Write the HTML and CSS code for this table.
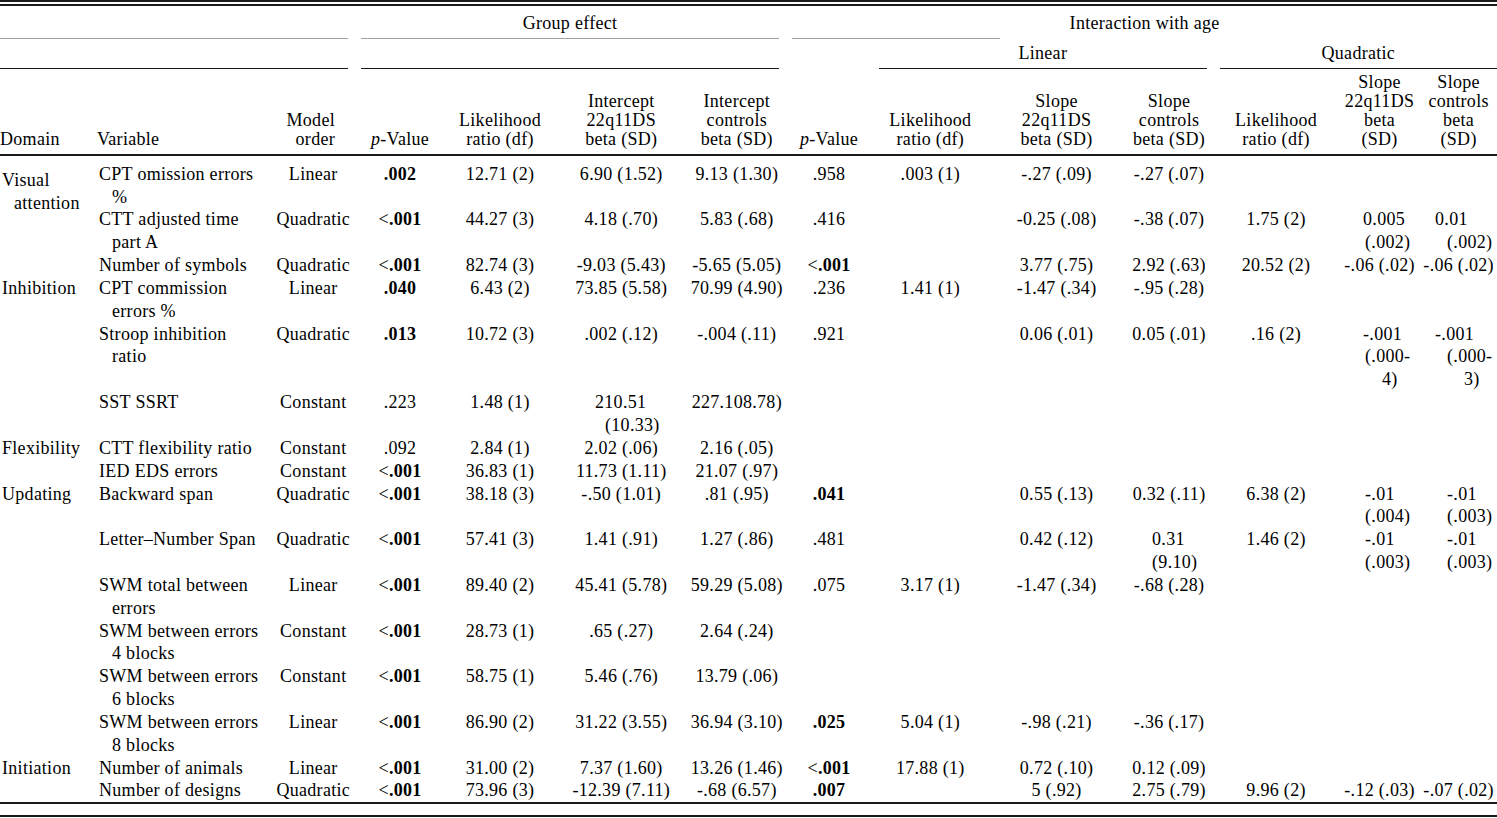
FILE: index.html
```html
<!DOCTYPE html>
<html>
<head>
<meta charset="utf-8">
<title>Table</title>
<link rel="stylesheet" href="styles.css">
</head>
<body>
<div class="wrap">
<table class="tbl">
<colgroup>
<col class="c1"><col class="c2"><col class="c3"><col class="c4"><col class="c5"><col class="c6"><col class="c7">
<col class="c8"><col class="c9"><col class="c10"><col class="c11"><col class="c12"><col class="c13"><col class="c14">
</colgroup>
<thead>
<tr class="h1">
<th colspan="3"><div class="grp gl">&nbsp;</div></th>
<th colspan="4"><div class="grp gm">Group effect</div></th>
<th colspan="7"><div class="grp gr gi">Interaction with age</div></th>
</tr>
<tr class="h2">
<th colspan="3"><div class="sub gl">&nbsp;</div></th>
<th colspan="4"><div class="sub gm">&nbsp;</div></th>
<th><div class="sub none">&nbsp;</div></th>
<th colspan="3"><div class="sub gm">Linear</div></th>
<th colspan="3"><div class="sub gr">Quadratic</div></th>
</tr>
<tr class="h3">
<th class="tl">Domain</th>
<th class="tl tv">Variable</th>
<th class="tr">Model<br>order</th>
<th><i>p</i>-Value</th>
<th>Likelihood<br>ratio (df)</th>
<th>Intercept<br>22q11DS<br>beta (SD)</th>
<th>Intercept<br>controls<br>beta (SD)</th>
<th><i>p</i>-Value</th>
<th>Likelihood<br>ratio (df)</th>
<th>Slope<br>22q11DS<br>beta (SD)</th>
<th>Slope<br>controls<br>beta (SD)</th>
<th>Likelihood<br>ratio (df)</th>
<th>Slope<br>22q11DS<br>beta<br>(SD)</th>
<th>Slope<br>controls<br>beta<br>(SD)</th>
</tr>
</thead>
<tbody>
<tr class="first">
<td class="dom va" rowspan="3">Visual<br>attention</td>
<td class="var">CPT omission errors<br>%</td>
<td>Linear</td>
<td><b>.002</b></td>
<td>12.71 (2)</td>
<td>6.90 (1.52)</td>
<td>9.13 (1.30)</td>
<td>.958</td>
<td>.003 (1)</td>
<td>-.27 (.09)</td>
<td>-.27 (.07)</td>
<td></td><td></td><td></td>
</tr>
<tr>
<td class="var">CTT adjusted time<br>part A</td>
<td>Quadratic</td>
<td>&lt;<b>.001</b></td>
<td>44.27 (3)</td>
<td>4.18 (.70)</td>
<td>5.83 (.68)</td>
<td>.416</td>
<td></td>
<td>-0.25 (.08)</td>
<td>-.38 (.07)</td>
<td>1.75 (2)</td>
<td class="h13">0.005<br>(.002)</td>
<td class="h14">0.01<br>(.002)</td>
</tr>
<tr>
<td class="var">Number of symbols</td>
<td>Quadratic</td>
<td>&lt;<b>.001</b></td>
<td>82.74 (3)</td>
<td>-9.03 (5.43)</td>
<td>-5.65 (5.05)</td>
<td>&lt;<b>.001</b></td>
<td></td>
<td>3.77 (.75)</td>
<td>2.92 (.63)</td>
<td>20.52 (2)</td>
<td>-.06 (.02)</td>
<td>-.06 (.02)</td>
</tr>
<tr>
<td class="dom" rowspan="3">Inhibition</td>
<td class="var">CPT commission<br>errors %</td>
<td>Linear</td>
<td><b>.040</b></td>
<td>6.43 (2)</td>
<td>73.85 (5.58)</td>
<td>70.99 (4.90)</td>
<td>.236</td>
<td>1.41 (1)</td>
<td>-1.47 (.34)</td>
<td>-.95 (.28)</td>
<td></td><td></td><td></td>
</tr>
<tr>
<td class="var">Stroop inhibition<br>ratio</td>
<td>Quadratic</td>
<td><b>.013</b></td>
<td>10.72 (3)</td>
<td>.002 (.12)</td>
<td>-.004 (.11)</td>
<td>.921</td>
<td></td>
<td>0.06 (.01)</td>
<td>0.05 (.01)</td>
<td>.16 (2)</td>
<td class="h13">-.001<br>(.000-<br><span class="ind">4)</span></td>
<td class="h14">-.001<br>(.000-<br><span class="ind">3)</span></td>
</tr>
<tr>
<td class="var">SST SSRT</td>
<td>Constant</td>
<td>.223</td>
<td>1.48 (1)</td>
<td class="h6">210.51<br>(10.33)</td>
<td>227.108.78)</td>
<td></td><td></td><td></td><td></td><td></td><td></td><td></td>
</tr>
<tr>
<td class="dom" rowspan="2">Flexibility</td>
<td class="var">CTT flexibility ratio</td>
<td>Constant</td>
<td>.092</td>
<td>2.84 (1)</td>
<td>2.02 (.06)</td>
<td>2.16 (.05)</td>
<td></td><td></td><td></td><td></td><td></td><td></td><td></td>
</tr>
<tr>
<td class="var">IED EDS errors</td>
<td>Constant</td>
<td>&lt;<b>.001</b></td>
<td>36.83 (1)</td>
<td>11.73 (1.11)</td>
<td>21.07 (.97)</td>
<td></td><td></td><td></td><td></td><td></td><td></td><td></td>
</tr>
<tr>
<td class="dom" rowspan="6">Updating</td>
<td class="var">Backward span</td>
<td>Quadratic</td>
<td>&lt;<b>.001</b></td>
<td>38.18 (3)</td>
<td>-.50 (1.01)</td>
<td>.81 (.95)</td>
<td><b>.041</b></td>
<td></td>
<td>0.55 (.13)</td>
<td>0.32 (.11)</td>
<td>6.38 (2)</td>
<td class="h13 flat">-.01<br>(.004)</td>
<td class="h14 flat">-.01<br>(.003)</td>
</tr>
<tr>
<td class="var">Letter–Number Span</td>
<td>Quadratic</td>
<td>&lt;<b>.001</b></td>
<td>57.41 (3)</td>
<td>1.41 (.91)</td>
<td>1.27 (.86)</td>
<td>.481</td>
<td></td>
<td>0.42 (.12)</td>
<td class="h11">0.31<br>(9.10)</td>
<td>1.46 (2)</td>
<td class="h13 flat">-.01<br>(.003)</td>
<td class="h14 flat">-.01<br>(.003)</td>
</tr>
<tr>
<td class="var">SWM total between<br>errors</td>
<td>Linear</td>
<td>&lt;<b>.001</b></td>
<td>89.40 (2)</td>
<td>45.41 (5.78)</td>
<td>59.29 (5.08)</td>
<td>.075</td>
<td>3.17 (1)</td>
<td>-1.47 (.34)</td>
<td>-.68 (.28)</td>
<td></td><td></td><td></td>
</tr>
<tr>
<td class="var">SWM between errors<br>4 blocks</td>
<td>Constant</td>
<td>&lt;<b>.001</b></td>
<td>28.73 (1)</td>
<td>.65 (.27)</td>
<td>2.64 (.24)</td>
<td></td><td></td><td></td><td></td><td></td><td></td><td></td>
</tr>
<tr>
<td class="var">SWM between errors<br>6 blocks</td>
<td>Constant</td>
<td>&lt;<b>.001</b></td>
<td>58.75 (1)</td>
<td>5.46 (.76)</td>
<td>13.79 (.06)</td>
<td></td><td></td><td></td><td></td><td></td><td></td><td></td>
</tr>
<tr>
<td class="var">SWM between errors<br>8 blocks</td>
<td>Linear</td>
<td>&lt;<b>.001</b></td>
<td>86.90 (2)</td>
<td>31.22 (3.55)</td>
<td>36.94 (3.10)</td>
<td><b>.025</b></td>
<td>5.04 (1)</td>
<td>-.98 (.21)</td>
<td>-.36 (.17)</td>
<td></td><td></td><td></td>
</tr>
<tr>
<td class="dom" rowspan="2">Initiation</td>
<td class="var">Number of animals</td>
<td>Linear</td>
<td>&lt;<b>.001</b></td>
<td>31.00 (2)</td>
<td>7.37 (1.60)</td>
<td>13.26 (1.46)</td>
<td>&lt;<b>.001</b></td>
<td>17.88 (1)</td>
<td>0.72 (.10)</td>
<td>0.12 (.09)</td>
<td></td><td></td><td></td>
</tr>
<tr class="last">
<td class="var">Number of designs</td>
<td>Quadratic</td>
<td>&lt;<b>.001</b></td>
<td>73.96 (3)</td>
<td>-12.39 (7.11)</td>
<td>-.68 (6.57)</td>
<td><b>.007</b></td>
<td></td>
<td>5 (.92)</td>
<td>2.75 (.79)</td>
<td>9.96 (2)</td>
<td>-.12 (.03)</td>
<td>-.07 (.02)</td>
</tr>
</tbody>
</table>
</div>
</body>
</html>
```
FILE: styles.css
```css
html, body {
  margin: 0;
  padding: 0;
  background: #fff;
}
body {
  font-family: "Liberation Serif", "Times New Roman", serif;
  font-size: 18px;
  color: #000;
  letter-spacing: 0.3px;
}
.wrap {
  width: 1497px;
  border-top: 6px double #1a1a1a;
  border-bottom: 2px solid #1a1a1a;
  padding-bottom: 11px;
}
.tbl {
  width: 1497px;
  table-layout: fixed;
  border-collapse: collapse;
  border-bottom: 2px solid #1a1a1a;
}
.c1 { width: 95px; }
.c2 { width: 177px; }
.c3 { width: 82.5px; }
.c4 { width: 91px; }
.c5 { width: 109px; }
.c6 { width: 133.5px; }
.c7 { width: 97.5px; }
.c8 { width: 87px; }
.c9 { width: 115.5px; }
.c10 { width: 137px; }
.c11 { width: 88px; }
.c12 { width: 126px; }
.c13 { width: 81px; }
.c14 { width: 77px; }

.tbl th, .tbl td {
  padding: 0;
  white-space: nowrap;
  font-weight: normal;
}
.tbl b { font-weight: bold; }

/* header row 1 */
.grp {
  line-height: 19px;
  padding: 7.5px 0 5.5px;
  border-bottom: 1px solid #a0a0a0;
  text-align: center;
}
.gi {
  border-bottom: none;
  padding-bottom: 6.5px;
  background: linear-gradient(#a0a0a0, #a0a0a0) left bottom / 208px 1px no-repeat;
}
.gl { margin-right: 6.5px; }
.gm { margin: 0 6.5px; }
.gr { margin-left: 6.5px; }

/* header row 2 */
.sub {
  line-height: 19px;
  padding: 5px 0;
  border-bottom: 1px solid #1a1a1a;
  text-align: center;
}
.sub.none { border-bottom-color: transparent; }

/* header row 3 */
.h3 th {
  vertical-align: bottom;
  line-height: 19.3px;
  padding: 3.5px 0 4px;
  border-bottom: 2px solid #1a1a1a;
  text-align: center;
}
.h3 th.tl { text-align: left; }
.h3 th.tv { padding-left: 2px; }
.h3 th.tr { text-align: right; padding-right: 19.5px; }

/* body */
.tbl td {
  line-height: 22.85px;
  vertical-align: top;
  text-align: center;
}
.tbl tr.first td { padding-top: 7px; }
.tbl tr.last td { padding-bottom: 0; }
.tbl td.dom {
  text-align: left;
  padding-left: 14px;
  text-indent: -12px;
}
.tbl tr.first td.va { padding-top: 13px; }
.tbl td.var {
  text-align: left;
  padding-left: 17px;
  text-indent: -13px;
}
.tbl td.h6 {
  text-align: left;
  padding-left: 50.5px;
  text-indent: -10px;
}
.tbl td.h11 {
  text-align: left;
  padding-left: 27px;
}
.tbl td.h13 {
  text-align: left;
  padding-left: 26px;
  text-indent: -2px;
}
.tbl td.h14 {
  text-align: left;
  padding-left: 27px;
  text-indent: -12px;
}
.tbl td.h13.flat, .tbl td.h14.flat { text-indent: 0; }
.ind { padding-left: 17px; }
```
